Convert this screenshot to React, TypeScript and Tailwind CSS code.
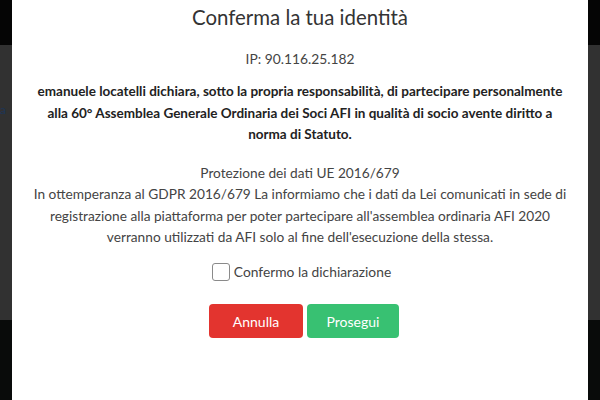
export default function App() {
  return (
    <div className="flex h-[400px] w-[600px] overflow-hidden bg-white font-['Lato',sans-serif]">
      <div className="flex w-[12px] flex-col">
        <div className="h-[45px] bg-[#050505]" />
        <div className="relative h-[275px] bg-[#313131]">
          <span className="absolute left-0 top-[58px] text-[12px] leading-[14px] text-[#1d3557]">a</span>
        </div>
        <div className="flex-1 bg-[#090b0a]" />
      </div>

      <div className="flex flex-1 flex-col items-center bg-white text-center">
        <h2 className="mt-[3px] text-[20.4px] leading-[28px] text-[#333]">Conferma la tua identità</h2>
        <p className="mt-[17px] text-[13.8px] leading-[21px] text-[#444]">IP: 90.116.25.182</p>
        <p className="mt-[12px] text-[13.5px] font-bold leading-[21.5px] text-[#222]">
          emanuele locatelli dichiara, sotto la propria responsabilità, di partecipare personalmente
          <br />
          alla 60° Assemblea Generale Ordinaria dei Soci AFI in qualità di socio avente diritto a
          <br />
          norma di Statuto.
        </p>
        <div className="mt-[16px] text-[13.7px] leading-[21.5px] text-[#444]">
          <div>Protezione dei dati UE 2016/679</div>
          <div>In ottemperanza al GDPR 2016/679 La informiamo che i dati da Lei comunicati in sede di</div>
          <div>registrazione alla piattaforma per poter partecipare all'assemblea ordinaria AFI 2020</div>
          <div>verranno utilizzati da AFI solo al fine dell'esecuzione della stessa.</div>
        </div>
        <label className="ml-[3px] mt-[14px] flex items-center gap-[4px] text-[13.8px] text-[#444]">
          <span className="h-[18px] w-[18px] rounded-[3px] border border-[#8a8a8a] bg-white" />
          <span>Confermo la dichiarazione</span>
        </label>
        <div className="ml-[8px] mt-[22px] flex gap-[4px]">
          <button className="h-[34px] w-[94px] rounded-[4px] bg-[#e3342f] text-[14px] text-white">Annulla</button>
          <button className="h-[34px] w-[92px] rounded-[4px] bg-[#38c172] text-[14px] text-white">Prosegui</button>
        </div>
      </div>

      <div className="flex w-[12px] flex-col">
        <div className="h-[45px] bg-[#050505]" />
        <div className="h-[275px] bg-[#313131]" />
        <div className="flex-1 bg-[#090b0a]" />
      </div>
    </div>
  );
}
